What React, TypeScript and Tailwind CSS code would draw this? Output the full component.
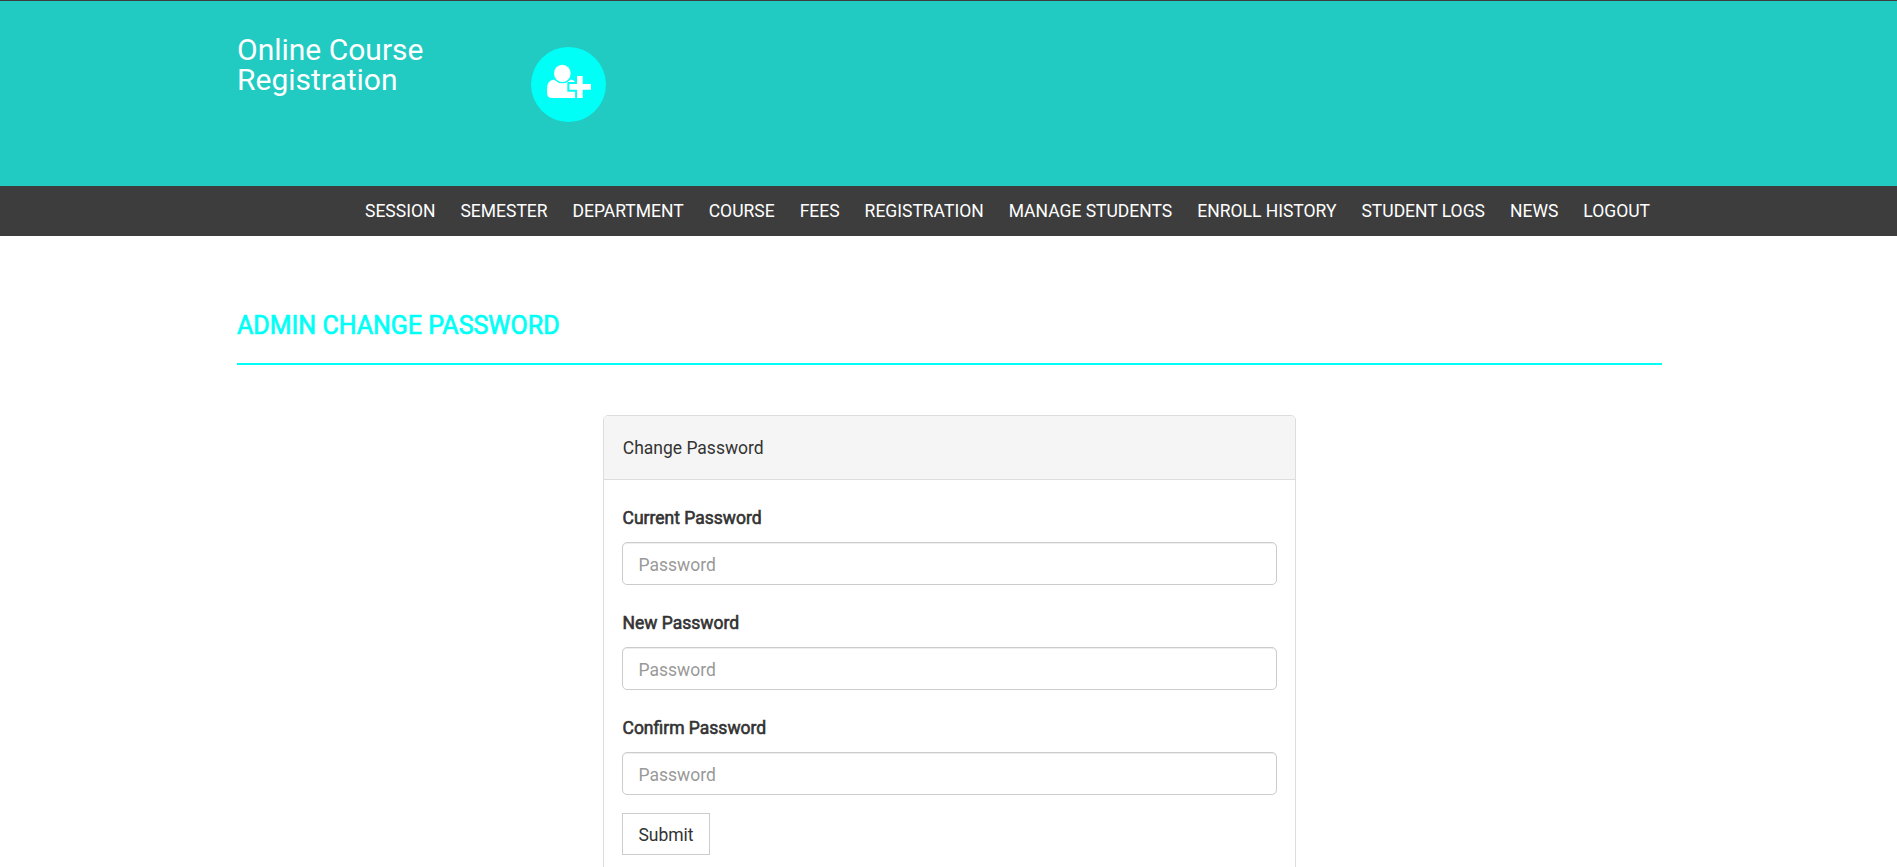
const links = ["SESSION", "SEMESTER", "DEPARTMENT", "COURSE", "FEES", "REGISTRATION", "MANAGE STUDENTS", "ENROLL HISTORY", "STUDENT LOGS", "NEWS", "LOGOUT"];
const fields = ["Current Password", "New Password", "Confirm Password"];

function PersonAddIcon() {
  return (
    <svg viewBox="0 0 225 225" className="h-[75px] w-[75px]" aria-hidden="true">
      <path fill="#fff" d="M66 98H122Q133 100 133 112V153H64Q48 153 48 137V125Q48 102 66 98Z" />
      <circle cx="94" cy="79" r="30" fill="#00fff7" />
      <ellipse cx="94" cy="79" rx="25" ry="26" fill="#fff" />
      <path fill="#00fff7" d="M109 105H133V82H160V105H186V134H160V158H133V134H109Z" />
      <path fill="#fff" d="M117 111H138V87H155V111H180V128H155V153H138V128H117Q115 128 115 126V113Q115 111 117 111Z" />
    </svg>
  );
}

export default function App() {
  return (
    <div className="h-[867px] overflow-hidden bg-white font-[Roboto,sans-serif] text-[17.5px] leading-[25px] text-[#333]">
      <header className="h-[186px] border-t border-[#3d3d3d] bg-[#21cbc2] pl-[2px]">
        <div className="mx-auto flex w-[1425px] items-start">
          <div className="mt-[34px] w-[294px] text-[30px] leading-[30px] text-white">Online Course<br />Registration</div>
          <div className="mt-[46px] h-[75px] w-[75px] rounded-full bg-[#00fff7]"><PersonAddIcon /></div>
        </div>
      </header>
      <nav className="h-[50px] bg-[#3d3d3d] pl-[2px]">
        <ul className="mx-auto flex h-[50px] w-[1425px] items-center justify-end gap-[25px] pr-[12px] text-white">
          {links.map((l) => <li key={l} className="whitespace-nowrap">{l}</li>)}
        </ul>
      </nav>
      <main className="pt-[73px] pl-[2px]">
        <div className="mx-auto w-[1425px]">
          <h1 className="h-[56px] border-b-2 border-[#00fff7] text-[25px] leading-[34px] text-[#00fff7] [-webkit-text-stroke:0.7px_#00fff7]">ADMIN CHANGE PASSWORD</h1>
          <section className="mx-auto mt-[50px] h-[500px] w-[693px] rounded-[5px] border border-[#ddd]">
            <div className="h-[64px] rounded-t-[4px] border-b border-[#ddd] bg-[#f5f5f5] px-[18.75px] pt-[20px]">Change Password</div>
            <form className="px-[18px] pt-[26px]">
              {fields.map((f) => (
                <label key={f} className="mb-[26px] block last-of-type:mb-[18px]">
                  <span className="mb-[11px] block pl-[0.5px] [-webkit-text-stroke:0.6px_#333]">{f}</span>
                  <input type="password" placeholder="Password" className="block h-[43px] w-full rounded-[5px] border border-[#ccc] px-[15.5px] pt-[2px] shadow-[inset_0_1px_1px_rgba(0,0,0,0.075)] placeholder:text-[#999]" />
                </label>
              ))}
              <button type="button" className="h-[42px] w-[88px] border border-[#ccc] pt-[3px] text-center">Submit</button>
            </form>
          </section>
        </div>
      </main>
    </div>
  );
}
